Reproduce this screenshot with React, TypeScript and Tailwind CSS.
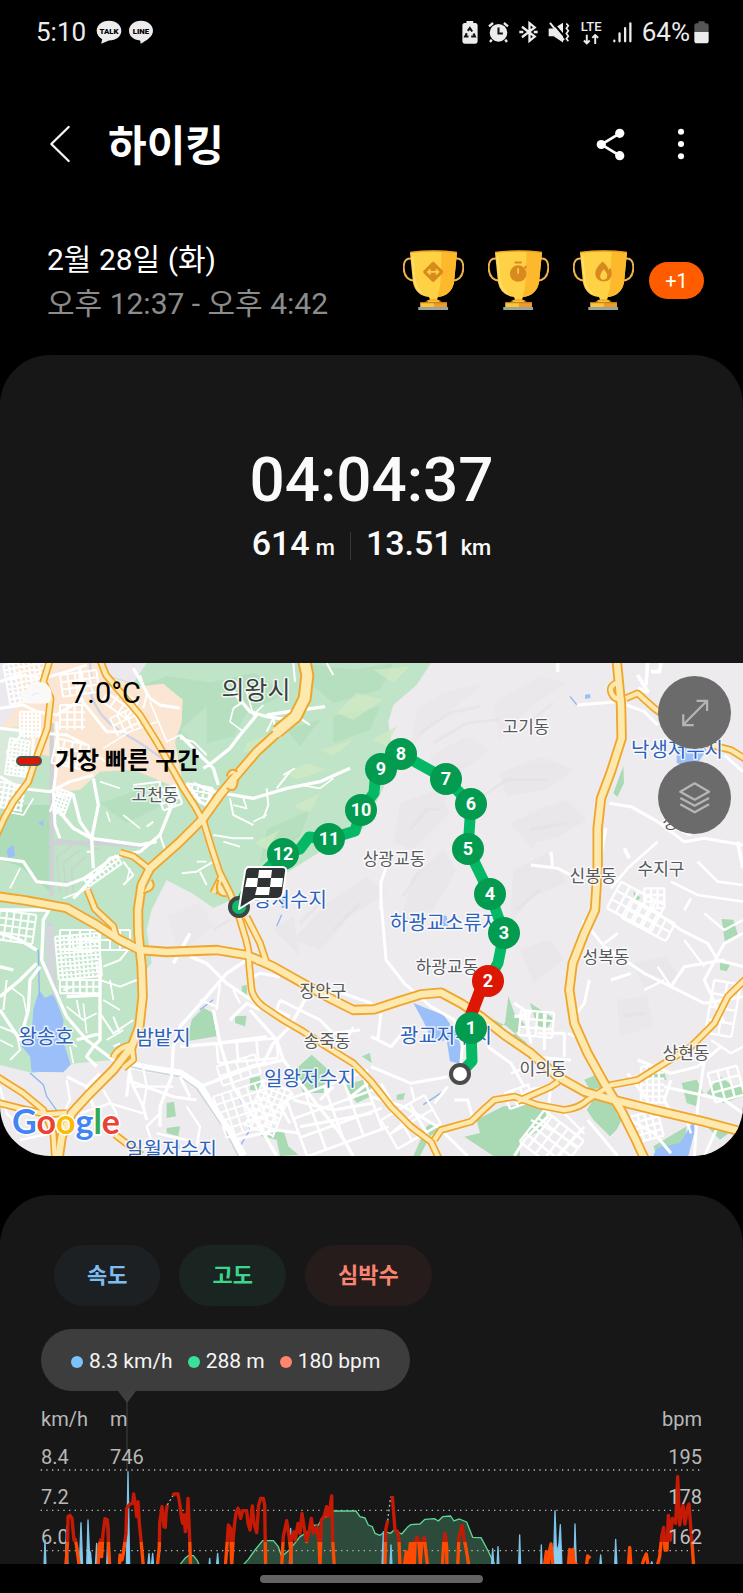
import type { ReactNode } from 'react';

const dots = [
  { n: '12', x: 283, y: 191 },
  { n: '11', x: 329, y: 176 },
  { n: '10', x: 361, y: 147 },
  { n: '9', x: 381, y: 106 },
  { n: '8', x: 401, y: 91 },
  { n: '7', x: 446, y: 116 },
  { n: '6', x: 471, y: 141 },
  { n: '5', x: 468, y: 186 },
  { n: '4', x: 490, y: 231 },
  { n: '3', x: 504, y: 270 },
  { n: '2', x: 488, y: 318, fast: true },
  { n: '1', x: 471, y: 365 },
];

const towns = [
  { name: '고천동', x: 155, y: 132 },
  { name: '고기동', x: 526, y: 64 },
  { name: '상광교동', x: 394, y: 196 },
  { name: '신봉동', x: 593, y: 213 },
  { name: '수지구', x: 661, y: 206 },
  { name: '하광교동', x: 447, y: 304 },
  { name: '성복동', x: 606, y: 294 },
  { name: '장안구', x: 323, y: 328 },
  { name: '송죽동', x: 327, y: 378 },
  { name: '이의동', x: 543, y: 406 },
  { name: '상현동', x: 686, y: 390 },
  { name: '정', x: 670, y: 159 },
];

const waters = [
  { name: '낙생저수지', x: 677, y: 87 },
  { name: '왕저수지', x: 290, y: 237 },
  { name: '하광교소류지', x: 445, y: 260 },
  { name: '왕송호', x: 46, y: 374 },
  { name: '밤밭지', x: 163, y: 375 },
  { name: '광교저수지', x: 446, y: 373 },
  { name: '일왕저수지', x: 310, y: 416 },
  { name: '일월저수지', x: 171, y: 487 },
];

// road centre lines, drawn at 3x
const highways = [
  'M300 -10 L318 36 360 86 420 156 470 236 510 306 550 376 585 430 612 480 632 546 658 626 690 690 717 761 738 830 745 860 748 911 755 981 Q762 1010 790 1031 L850 1071 910 1106 980 1151 1060 1201 1113 1255 1173 1331 1233 1391 1293 1436 1318 1490',
  'M150 -10 L130 56 152 106 142 196 105 296 85 356 40 416 12 466 -10 516',
  'M-10 1240 L70 1291 130 1341 160 1411 165 1490',
  'M-10 1318 L60 1336 140 1354 200 1350',
  'M345 1415 L425 1476',
  'M1303 1431 L1323 1401 1413 1376 Q1450 1340 1483 1311 L1543 1301 1613 1326 1693 1341 Q1740 1335 1763 1311 L1833 1266 1913 1251 1993 1201 2073 1151 2143 1081 2183 1001 2240 945',
  'M1553 1315 L1653 1271 1675 1256',
  'M1878 106 L1913 91 1963 136 2073 216 2133 246 2193 261 2240 290',
  'M1850 60 Q1825 70 1835 92 T1870 106',
  'M360 568 L400 580 450 620',
  'M262 680 L285 738 340 790 350 825 390 840',
  'M740 761 L780 840 800 900 770 895',
  'M640 690 L665 640',
  'M340 1185 Q350 1155 395 1145 L400 1190 370 1215',
];

const mainRoads = [
  'M910 -10 L920 36 912 106 885 166 830 211 770 266 710 336 660 396 610 466 540 536 450 616 425 666 414 741 415 811 425 911 428 1001 418 1091 395 1151 340 1221 270 1291 215 1351 185 1421 175 1490',
  'M-10 700 L80 713 200 735 290 786 360 831 420 861 500 867 650 861 740 876 820 911 900 956 1000 1011 1060 1041 1123 1039 1193 1016 1263 994 1323 989 1383 1021 1443 1061 1513 1116 1593 1171 1673 1241 1753 1286 1833 1309 1963 1341 2113 1376 2240 1410',
  'M1850 -10 L1863 126 1865 226 1833 326 1803 406 1793 496 1793 616 1785 741 1753 811 1718 901 1708 981 1723 1081 1763 1171 1813 1261 1863 1341 1903 1421 1935 1490',
];

const Blocks = ({ x, y, w, h, step, rot = 0 }: { x: number; y: number; w: number; h: number; step: number; rot?: number }) => {
  let d = '';
  for (let i = 0; i <= w; i += step) d += `M${i} 0V${h}`;
  for (let j = 0; j <= h; j += step) d += `M0 ${j}H${w}`;
  return <path d={d} transform={`translate(${x} ${y}) rotate(${rot})`} />;
};

const Label = ({ x, y, size, color, children }: { x: number; y: number; size: number; color: string; children: ReactNode }) => (
  <text
    x={x}
    y={y + Math.round(size * 0.37)}
    fontSize={size}
    fill={color}
    textAnchor="middle"
    stroke="#fff"
    strokeOpacity={0.75}
    strokeWidth={3}
    strokeLinejoin="round"
    paintOrder="stroke"
  >
    {children}
  </text>
);

const TrailMap = () => (
  <svg viewBox="0 0 743 493" className="block w-full" role="img" aria-label="하이킹 경로">
    <rect width="743" height="493" fill="#eeebee" />

    {/* terrain */}
    <g transform="scale(0.33333)">
      <path
        d="M0 0H1293L1250 66 1180 126 1165 176 1175 256 1150 376 1090 496 960 566 850 636 720 700 640 735 575 690 500 652 480 690 455 741 440 800 455 900 415 950 415 1061 400 1141 340 1191 230 1201 100 1231 0 1206Z"
        fill="#bfe4c8"
      />
      <path d="M0 456 60 426 150 426 155 690 60 610 0 590Z" fill="#aedcb8" />
      <path d="M340 100 500 40 640 60 620 130 540 200 600 260 520 220Z M620 60 760 30 860 90 740 150 700 220 620 240Z M900 0 1060 20 1180 0 1140 80 1000 120 930 60Z M300 420 420 380 480 430 380 480Z M860 200 960 170 900 250Z M800 500 930 440 900 520 780 600Z M1000 160 1140 130 1110 200 1000 240Z" fill="#add9b5" opacity="0.5" />
      <path d="M740 240 800 215 790 250 730 270Z M860 330 920 300 980 320 890 350Z M1010 150 1070 90 1150 110 1060 170Z M880 430 960 390 930 450Z M1113 230 1190 190 1160 250Z M760 540 840 500 800 560Z M960 260 1060 230 1000 280Z M1120 20 1230 10 1180 60Z" fill="#cfe9c4" opacity="0.8" />
      <path d="M0 0H290L322 40 420 70 490 62 548 110 545 180 525 236 545 340 520 370 400 320 300 326 240 380 155 391 150 280 0 250Z" fill="#fae6d2" />
      <path d="M0 0H40L60 120 0 200Z M300 0H440L400 60 330 40Z" fill="#ece9ee" />
      <path d="M0 195 80 190 100 300 60 400 0 440Z" fill="#d9eadb" />

      {/* relief */}
      <g fill="#e4e4e6" opacity="0.45">
        <path d="M1250 140 1330 90 1450 60 1380 120 1290 190 1230 260Z M1480 120 1620 40 1700 60 1590 130 1500 230Z M1290 280 1400 220 1470 260 1380 330 1330 420Z M1500 330 1620 280 1720 320 1640 380 1520 400Z M1580 450 1700 410 1760 470 1680 520 1600 540Z M1200 420 1310 380 1350 450 1240 560 1180 540Z" />
        <path d="M1240 640 1330 560 1370 620 1300 740 1200 780Z M1540 620 1640 570 1700 660 1600 700 1530 780Z M980 720 1100 640 1160 690 1050 760 960 860 880 830Z M500 760 600 720 640 790 540 870Z M1560 860 1650 830 1690 890 1600 960Z M1850 1010 1940 1000 1960 1090 1860 1120Z M1900 900 2000 880 2040 950 1930 970Z M1530 480 1620 440 1600 560Z M820 800 880 760 900 880Z" />
      </g>
      <g fill="none" stroke="#dfdfe2" strokeWidth="8" opacity="0.5">
        <path d="M1260 210 1350 150 1440 130 M1300 240 1400 180 1500 170 M1560 200 1660 120 M1420 420 1520 350 1640 350 M1590 500 1700 480 M1230 500 1280 440 1320 440 M1000 800 1080 720 M1550 740 1620 680 M1210 700 1260 620 M640 800 690 770 M900 780 960 720 M1870 1060 1930 1050" />
      </g>

      {/* parks */}
      <g fill="#a9dab3">
        <path d="M1870 310 1840 390 1852 402 1872 360Z M1900 685 1922 705 1905 718Z M2165 768 2200 770 2215 820 2175 840Z M2160 900 2190 905 2180 925 2160 920Z" />
        <path d="M1525 1000 1515 1080 1498 1095 1530 1125 1575 1085 1545 1055Z M1590 1020 1660 1065 1640 1100 1610 1085Z M1450 1055 1520 1090 1580 1140 1570 1160 1470 1095Z" />
        <path d="M575 1070 610 1035 640 1050 650 1120 560 1135Z M705 1060 740 1058 735 1090 705 1080Z M725 970 740 965 742 1000 725 990Z M885 1220 935 1175 985 1220 970 1290 910 1290Z M750 1245 780 1240 785 1285 750 1280Z M1035 1265 1110 1245 1113 1300 1070 1320Z M500 1320 522 1316 528 1360 500 1365Z M500 1395 540 1390 535 1420 500 1410Z M780 1418 850 1400 865 1450 895 1475 840 1479 830 1430Z M1085 1180 1110 1170 1115 1200Z" />
        <path d="M1393 1421 1440 1410 1430 1370 1510 1330 1620 1320 1650 1350 1620 1400 1560 1440 1560 1479 1480 1479Z M1780 1310 1850 1320 1870 1360 1850 1400 1830 1420 1780 1370 1760 1340Z M1753 1250 1800 1230 1830 1270 1770 1280Z M1940 1210 1990 1220 2000 1250 1940 1250Z M2045 1260 2090 1250 2110 1290 2090 1330 2060 1320Z M2120 1290 2160 1240 2200 1270 2229 1270 2229 1300 2170 1320Z M1960 1450 2060 1390 2050 1479H1970Z M2120 1390 2200 1400 2160 1430Z M1190 1295 1215 1290 1210 1310 1190 1310Z M1280 1390 1300 1380 1320 1400 1290 1420 1260 1479 1240 1479Z" />
      </g>

      {/* water */}
      <g fill="#9bbff8">
        <path d="M112 1000 120 985 135 1005 160 992 175 1030 190 1070 188 1130 212 1205 190 1228 95 1226 90 1180 65 1150 95 1110 100 1040Z" />
        <path d="M1240 1020 1290 1040 1330 1055 1370 1110 1385 1160 1390 1205 1350 1195 1340 1130 1300 1140 1270 1075Z" />
        <path d="M2030 245 2090 230 2120 260 2080 320 2030 300Z M2080 1375 2085 1400 2065 1479H1960L1970 1455 2040 1440Z M840 700 860 690 862 735 845 735Z M1325 755 1340 760 1345 790 1325 790Z M20 560 40 545 45 580 25 585Z M115 480 130 470 130 490Z M1755 95 1770 93 1772 105 1755 108Z M930 1235 940 1215 955 1240Z M520 1440 535 1430 540 1460Z" />
      </g>
      <path d="M118 1000 115 860 M90 1230 130 1265 140 1300 172 1345 M705 1275 735 1340 750 1400 720 1450 M600 1040 640 1010 M1710 100 1730 125 M1270 1325 1330 1285 M830 790 845 755" fill="none" stroke="#8fb5f2" strokeWidth="4" />

      <path d="M155 180V700 M150 780 150 850 165 1000 M160 540 300 540 450 550" fill="none" stroke="#cfd1d6" strokeWidth="13" />
      <path d="M135 790H165L162 960 140 910Z" fill="#d3d7db" />
      <path d="M180 690 170 580 230 540 300 560 M200 690 190 600 240 560 M220 690 215 620 260 580 M170 530 300 545" fill="none" stroke="#cbd3d2" strokeWidth="5" />
      <path d="M270 0 275 100 Q300 170 370 210 T490 290" fill="none" stroke="#cfd3e8" strokeWidth="7" />
    </g>

    {/* side streets, upper left */}
    <g transform="translate(0 -8) scale(0.33333)" fill="none" stroke="#fff" strokeWidth="9" strokeLinejoin="round">
      <path d="M0 80 60 60 130 70 200 50 260 30 M0 160 70 150 110 170 170 180 250 130 M0 220 130 235 200 240 260 270 M0 365 60 400 150 410 210 380 280 360 M100 250 95 340 60 360 M170 200 175 300 160 410 165 510 180 550 M240 40 240 130 280 180 320 230 380 230 M400 40 450 130 480 150 540 160" />
      <path d="M170 420 220 420 240 500 275 550 280 640 M275 550 420 570 470 560 M280 370 295 450 275 550 M170 460 220 520 275 550 M520 440 480 540 420 590 330 610 260 690 220 730 M0 610 70 620 110 680 200 690 280 660" strokeWidth="10" />
      <path d="M1050 340 960 380 860 400 760 430 640 410 580 385 M560 385 600 440 620 450 640 400 M770 180 720 240 690 280 640 320 610 340 M540 240 600 300 640 340 655 390 M700 110 750 170 800 185 870 195 M975 155 900 165 800 180" strokeWidth="10" />
      <path d="M420 60 440 120 430 160 M540 250 580 260 620 300 M690 430 700 480 740 500 760 510 M800 400 805 450 790 490 M830 400 870 350 M640 540 700 550 760 550 M640 620 590 650 545 655 M600 650 620 690 M460 500 440 515 M480 540 500 600 M400 390 480 380 480 440 M880 24 885 80 M800 230 820 190 830 240 M900 190 930 210 M700 160 730 140 M980 24 1000 60 M370 620 400 660 370 690 M280 590 260 590" strokeWidth="6" />
      <path d="M70 230 20 290 40 340 M100 430 70 480 20 470 M290 300 330 330 420 300 M310 280 390 230 470 200 M450 140 500 260 540 240 M180 320 240 330 300 310 M300 380 360 400 M320 470 330 500 M370 480 420 520 M700 160 690 200 730 230 M740 110 760 180 790 150 M850 360 885 340 M900 390 960 400 1000 370 M730 430 740 460 700 450 M760 500 800 480 M670 560 720 575 M620 620 590 620 M500 600 450 620 M390 640 380 680 M60 640 30 700 M190 730 270 700" strokeWidth="5" />
      <g strokeWidth="6">
        <Blocks x={10} y={30} w={120} h={120} step={15} rot={-10} />
        <Blocks x={30} y={250} w={60} h={110} step={12} rot={8} />
        <Blocks x={60} y={170} w={60} h={80} step={12} />
        <Blocks x={180} y={150} w={75} h={75} step={22} />
        <Blocks x={330} y={190} w={90} h={60} step={24} rot={-25} />
        <Blocks x={180} y={60} w={110} h={66} step={22} rot={-8} />
        <Blocks x={560} y={385} w={80} h={36} step={18} rot={10} />
        <Blocks x={250} y={670} w={120} h={30} step={15} rot={-35} />
        <Blocks x={175} y={400} w={45} h={75} step={11} rot={20} />
        <Blocks x={0} y={380} w={80} h={75} step={15} rot={10} />
        <Blocks x={170} y={250} w={100} h={75} step={25} rot={12} />
        <Blocks x={340} y={90} w={90} h={60} step={30} rot={35} />
        <Blocks x={470} y={410} w={60} h={60} step={20} rot={-20} />
      </g>
    </g>

    {/* side streets, upper right */}
    <g transform="translate(371 -8) scale(0.33333)" fill="none" stroke="#fff" strokeWidth="9" strokeLinejoin="round">
      <path d="M620 150 740 140 820 170 860 210 M715 445 780 455 860 500 940 560 1000 550 1116 570 M480 630 560 640 600 660 M540 590 545 640 M45 640 30 680 30 765 M1060 300 1116 350 M705 520 690 600" />
      <path d="M560 24V50 M800 60 830 110 800 100 M830 24 825 90 M870 24 865 50 840 50 M760 580 775 610 M1100 560 1116 640 M900 510 960 540" strokeWidth="11" />
      <g strokeWidth="7">
        <Blocks x={750} y={680} w={150} h={90} step={30} rot={28} />
        <Blocks x={820} y={700} w={60} h={60} step={20} />
      </g>
      <path d="M720 700 770 640 860 560 M900 680 980 720 1116 740 M940 765 960 730 M980 620 1040 680 1116 690" strokeWidth="8" />
    </g>

    {/* side streets, lower left */}
    <g transform="translate(0 237) scale(0.33333)" fill="none" stroke="#fff" strokeWidth="9" strokeLinejoin="round">
      <path d="M150 24 130 60 125 180 160 260 200 350 260 420 340 480 380 500 M110 190 60 240 0 290 M120 200 90 240 85 330 60 420 0 330 M0 100 60 120 110 150 M0 200 40 210 M300 180 300 420 280 440 260 470 290 500 M0 30 140 30 M200 290 300 285 M230 420 300 400" strokeWidth="10" />
      <path d="M300 240 360 260 410 240 M300 340 340 400 400 360 M360 400 340 350 M310 200 360 180 400 130 M0 380 50 400 60 450 30 480 M20 240 10 330 M200 420 230 440 M340 440 360 430 M220 260 190 270" strokeWidth="6" />
      <path d="M30 260 70 290 80 340 M0 420 40 440 M200 320 250 360 290 340 M230 300 240 350 M310 300 360 330 M320 420 370 390 M210 440 220 490 M250 310 260 400 M330 240 340 300" strokeWidth="5" />
      <path d="M370 490 440 505 540 520 600 560 650 640 690 700 730 768" stroke="#fff" strokeWidth="24" />
      <path d="M370 495 440 512 540 530 590 565 640 640 680 700 715 768" stroke="#cdd9d9" strokeWidth="5" />
      <path d="M520 190 570 100 M570 170 620 190 680 250 770 310 M740 180 680 220 620 290 540 380 520 440 515 530 480 620 480 680 M540 440 650 430 800 410 M640 330 660 430 700 560 780 680 830 768 M920 290 870 380 820 430 790 490 700 520 M750 330 830 420 850 480 940 600 1020 700 1060 768 M600 560 760 500 850 480 M690 360 740 310 780 330" strokeWidth="10" />
      <path d="M390 520 400 560 430 620 440 660 M380 540 520 590 590 600 M390 500 380 590 M540 530 570 590 M200 530 260 560 300 520 M260 560 280 620 M840 300 900 330 960 360 1000 400 1080 390 M1000 270 1116 310 M840 300 830 330 870 350 M760 230 780 220 840 230 M880 600 1000 630 1116 610 M900 680 1116 640 M880 580 840 620 870 670 M700 720 830 690 900 700 M960 600 1000 560 M1116 540 1040 600" />
      <path d="M0 560 20 640 60 680 M310 570 350 640 340 700 M200 540 210 600 190 640 M60 720 150 700 M240 640 330 610 430 640 M440 560 430 620 M400 560 520 560 M480 640 440 680 460 740 M560 620 600 680 590 740 M660 250 650 330 M700 270 720 310 M600 300 650 320 M1040 420 1060 380 M430 505 440 560 M470 700 560 720" strokeWidth="7" />
      <g strokeWidth="6">
        <Blocks x={165} y={110} w={130} h={130} step={13} rot={-5} />
        <Blocks x={0} y={30} w={110} h={88} step={22} rot={8} />
        <Blocks x={180} y={90} w={210} h={60} step={30} />
        <Blocks x={640} y={590} w={160} h={130} step={26} rot={-18} />
        <Blocks x={790} y={540} w={90} h={150} step={18} rot={22} />
        <Blocks x={650} y={500} w={120} h={60} step={30} rot={-18} />
        <Blocks x={180} y={240} w={120} h={40} step={20} />
      </g>
      <g strokeWidth="8">
        <Blocks x={860} y={600} w={260} h={180} step={60} rot={-20} />
        <Blocks x={650} y={430} w={180} h={60} step={60} rot={-5} />
      </g>
    </g>

    {/* side streets, lower right */}
    <g transform="translate(371 237) scale(0.33333)" fill="none" stroke="#fff" strokeWidth="9" strokeLinejoin="round">
      <path d="M30 0 45 180 100 250 180 320 250 360 275 420 270 490 M0 410 60 440 110 380 M30 340 20 420 M0 500 120 550 230 530 M230 560 190 610 M250 600 290 600 310 670 M0 590 100 620 200 680 290 768 M350 440 420 490 460 560 M540 550 530 650 460 720 430 768" />
      <path d="M660 90 700 140 820 220 900 260 1000 310 M640 60 620 140 M655 240 640 310 600 360 M780 220 720 240 M700 130 740 100 M860 40 930 90 1010 130 1040 180 1116 200 M1116 100 1060 130 1000 240 1060 370 M1000 310 1116 290 M900 260 940 200 1060 180" />
      <path d="M430 310 460 330 480 430 M520 340 520 450 M500 400 580 400 580 470 M480 470 600 480 M430 350 480 340 M800 480 900 520 980 500 1050 440 M770 520 830 600 820 640 M900 540 880 600 900 640 M1000 480 980 620 970 768 M880 560 1060 600 1116 640 M740 640 850 700 900 760 M1040 680 1000 768 M640 680 560 768 M650 660 740 768" />
      <path d="M590 400 640 420 M420 520 470 500 M440 600 470 570 520 560 M480 660 560 700 620 740 M580 640 640 700 M1000 40 1060 90 1116 60 M940 120 1000 200 M860 200 900 260 M820 270 880 240 M30 550 60 600 M60 700 130 640 180 720 M120 560 130 600 M1020 420 1080 460 1116 440 M940 640 960 700" strokeWidth="7" />
      <g strokeWidth="7">
        <Blocks x={520} y={630} w={150} h={120} step={30} rot={38} />
        <Blocks x={810} y={500} w={70} h={110} step={18} />
        <Blocks x={780} y={650} w={80} h={80} step={20} rot={-15} />
        <Blocks x={780} y={0} w={150} h={60} step={30} rot={28} />
        <Blocks x={400} y={580} w={80} h={50} step={25} rot={-20} />
        <Blocks x={1030} y={240} w={80} h={160} step={40} rot={10} />
        <Blocks x={30} y={660} w={150} h={100} step={50} rot={-30} />
        <Blocks x={450} y={330} w={100} h={75} step={25} rot={5} />
        <Blocks x={1010} y={520} w={90} h={90} step={30} rot={-15} />
      </g>
    </g>

    {/* highways */}
    <g transform="scale(0.33333)" fill="none" strokeLinejoin="round">
      {highways.map((d) => <path key={d} d={d} stroke="#f0a62c" strokeWidth="23" />)}
      {mainRoads.map((d) => <path key={d} d={d} stroke="#f0a62c" strokeWidth="31" />)}
      {highways.map((d) => <path key={d} d={d} stroke="#fde9ae" strokeWidth="13" />)}
      {mainRoads.map((d) => <path key={d} d={d} stroke="#fde9ae" strokeWidth="20" />)}
      <path d="M912 -10 L922 36 914 106 887 160 832 205" stroke="#f0a62c" strokeWidth="42" />
      <path d="M912 -10 L922 36 914 106 887 160 825 212" stroke="#fde9ae" strokeWidth="30" />
      <g stroke="#f0a62c" strokeWidth="6" fill="#fde9ae">
        <path d="M680 340 Q690 310 712 326 M680 375 Q710 395 714 350 M455 650 Q475 680 430 690 M655 650 Q640 700 680 700" />
      </g>
    </g>

    <Label x={256} y={27} size={25} color="#3b3f40">의왕시</Label>
    {towns.map((t) => <Label key={t.name} x={t.x} y={t.y} size={17} color="#55585c">{t.name}</Label>)}
    {waters.map((w) => <Label key={w.name} x={w.x} y={w.y} size={20} color="#2c62bd">{w.name}</Label>)}

    {/* trail */}
    <path
      d="M460 411 L472 398 471 365 M488 318 L498 300 504 270 490 231 468 186 471 141 446 116 401 91 381 106 375 118 374 130 361 147 355 168 329 176 309 174 300 186 283 191 250 222 239 244"
      fill="none"
      stroke="#05b865"
      strokeWidth="11"
      strokeLinejoin="round"
    />
    <path d="M471 352 L484 318" stroke="#dc1703" strokeWidth="12" />
    <circle cx="239" cy="244" r="9" fill="#0fb968" stroke="#3f4444" strokeWidth="4" />
    <circle cx="460" cy="411" r="9" fill="#fff" stroke="#4b4b4b" strokeWidth="4" />
    {dots.map((m) => (
      <g key={m.n}>
        <circle cx={m.x} cy={m.y} r="16" fill={m.fast ? '#dc1703' : '#029b4f'} />
        <text x={m.x} y={m.y + 6} fontSize="18" fontWeight="700" fill="#fff" textAnchor="middle">{m.n}</text>
      </g>
    ))}

    {/* finish flag */}
    <path d="M249 204 H282 Q287 204 286 209 L283 230 Q282 236 277 236 H255 L239 246 L245 208 Q246 204 249 204Z" fill="#303334" stroke="#fff" strokeWidth="2" strokeLinejoin="round" />
    <g fill="#fff">
      <path d="M259 207H272L271 215H258Z M247 215H258L257 224H245Z M271 215H283L282 224H270Z M257 224H270L269 232H255Z" />
    </g>

    {/* map provider */}
    <text x="12" y="471" fontSize="34" fontWeight="700" fontFamily="Lato, sans-serif" stroke="#fff" strokeWidth="3" paintOrder="stroke">
      <tspan fill="#4285f4">G</tspan>
      <tspan fill="#ea4335">o</tspan>
      <tspan fill="#fbbc05">o</tspan>
      <tspan fill="#4285f4">g</tspan>
      <tspan fill="#34a853">l</tspan>
      <tspan fill="#ea4335">e</tspan>
    </text>
  </svg>
);

const Trophy = ({ children }: { children: ReactNode }) => (
  <svg viewBox="98 748 184 184" className="size-[61px]" aria-hidden="true">
    <path d="M124 774 Q100 770 100 803 Q102 838 134 841 M256 774 Q280 770 280 803 Q278 838 246 841" fill="none" stroke="#eeb34b" strokeWidth="6" />
    <path d="M119 755 Q190 746 261 755 L252 845 Q245 884 204 890 L200 897 Q202 903 220 907 H160 Q178 903 180 897 L176 890 Q135 884 128 845Z" fill="#ffd145" />
    <path d="M214 751 L261 755 252 845 Q245 884 200 890 Q212 870 212 820Z" fill="#fdb92b" />
    <path d="M119 755 Q190 747 261 755" fill="none" stroke="#e9a320" strokeWidth="4" />
    <path d="M127 766 L134 845 Q140 868 158 880" fill="none" stroke="#ffe07a" strokeWidth="4" />
    <path d="M165 903 Q190 888 215 903Z" fill="#f3b02c" />
    <rect x="150" y="906" width="80" height="15" fill="#ffc53a" />
    <rect x="191" y="906" width="39" height="15" fill="#f29a27" />
    <path d="M150 907 H230" stroke="#b97b18" strokeWidth="3" />
    <rect x="144" y="920" width="90" height="9" fill="#98a69d" />
    <g fill="#d98a1f">{children}</g>
  </svg>
);

const StatusBar = () => (
  <div className="flex h-16 items-center justify-between pr-[34px] pl-9 text-[26px] text-[#ececec]">
    <div className="flex items-center gap-[6px]">
      <span className="mr-1">5:10</span>
      <svg viewBox="286 58 78 74" className="h-6 w-[26px]" aria-hidden="true">
        <path d="M325 60 C348 60 363 74 363 91 C363 108 348 121 325 121 L301 131 L304 117 C293 111 287 102 287 91 C287 74 302 60 325 60Z" fill="#ececec" />
        <text x="325" y="101" fontSize="24" fontWeight="900" textAnchor="middle" fill="#000">TALK</text>
      </svg>
      <svg viewBox="384 58 76 74" className="h-6 w-[26px]" aria-hidden="true">
        <path d="M422 60 C444 60 459 74 459 91 C459 108 440 121 421 131 C420 127 421 124 419 121 C398 119 385 107 385 91 C385 74 400 60 422 60Z" fill="#ececec" />
        <text x="422" y="101" fontSize="24" fontWeight="900" textAnchor="middle" fill="#000">LINE</text>
      </svg>
    </div>
    <div className="flex items-center gap-[10px]">
      <svg viewBox="269 62 47 68" className="h-[23px] w-4" aria-hidden="true">
        <path d="M282 62H302V68H308Q315 68 315 76V121Q315 129 307 129H278Q270 129 270 121V76Q270 68 277 68H282Z" fill="#ececec" />
        <path d="M286 91 L292 83 L299 93 M303 99 L307 108 H296 M288 108 H278 L283 98" fill="none" stroke="#111" strokeWidth="6" />
      </svg>
      <svg viewBox="349 64 62 62" className="size-[21px]" aria-hidden="true">
        <circle cx="380" cy="96" r="26" fill="#ececec" />
        <path d="M352 77 364 67 M408 77 396 67 M360 116 355 123 M400 116 405 123" stroke="#ececec" strokeWidth="7" />
        <path d="M380 80V98H393" fill="none" stroke="#111" strokeWidth="6" />
      </svg>
      <svg viewBox="441 62 58 66" className="h-[22px] w-[19px]" fill="none" stroke="#ececec" strokeWidth="7" aria-hidden="true">
        <path d="M450 79 L489 109 L473 122 V68 L489 81 L450 111 M442 95H454 M486 95H498" />
      </svg>
      <svg viewBox="528 64 66 62" className="h-[21px] w-[22px]" aria-hidden="true">
        <path d="M530 83 H545 L573 66 V125 L545 106 H530Z" fill="#ececec" />
        <path d="M541 64 L585 116" stroke="#000" strokeWidth="6" />
        <path d="M534 66 L576 118" stroke="#ececec" strokeWidth="6" />
        <path d="M583 68 l6 7 -6 7 6 8 -6 8 6 8 -6 8 6 7" fill="none" stroke="#ececec" strokeWidth="5" />
      </svg>
      <div className="flex w-[23px] flex-col items-center">
        <span className="text-[13px] leading-[14px] font-medium">LTE</span>
        <svg viewBox="636 97 48 34" className="h-[11px] w-4" aria-hidden="true">
          <path d="M647 99V125 M638 117 L647 126 656 117 M673 128V101 M664 109 L673 100 682 109" fill="none" stroke="#ececec" strokeWidth="6" />
        </svg>
      </div>
      <svg viewBox="719 64 58 62" className="h-[21px] w-[19px]" stroke="#ececec" strokeWidth="7" strokeLinecap="round" aria-hidden="true">
        <path d="M723 120V122 M739 98V122 M756 82V122 M772 67V122" />
      </svg>
      <span className="flex items-center gap-1">
        64%
        <svg viewBox="967 62 45 67" className="h-[23px] w-[15px]" aria-hidden="true">
          <path d="M980 62H999V68H1004Q1011 68 1011 76V94H968V76Q968 68 975 68H980Z" fill="#555" />
          <path d="M968 94H1011V121Q1011 128 1003 128H976Q968 128 968 121Z" fill="#ececec" />
        </svg>
      </span>
    </div>
  </div>
);

const AppBar = () => (
  <header className="flex h-40 items-center justify-between px-12 text-white">
    <div className="flex items-center gap-9">
      <button type="button" aria-label="뒤로" className="flex w-6 justify-center">
        <svg viewBox="150 376 64 114" className="h-[38px] w-[22px]" fill="none" stroke="#f5f5f5" strokeWidth="7" strokeLinecap="round" strokeLinejoin="round">
          <path d="M208 382 L156 433 L208 484" />
        </svg>
      </button>
      <h1 className="pt-[5px] text-[42px] leading-none font-bold">하이킹</h1>
    </div>
    <div className="flex items-center gap-[42px]">
      <button type="button" aria-label="공유">
        <svg viewBox="676 384 88 98" className="h-[33px] w-[29px]" fill="#fff">
          <path d="M748 399 L692 433 L748 467" fill="none" stroke="#fff" strokeWidth="8" />
          <circle cx="748" cy="399" r="14" />
          <circle cx="692" cy="433" r="14" />
          <circle cx="748" cy="467" r="14" />
        </svg>
      </button>
      <button type="button" aria-label="옵션 더보기" className="flex w-7 justify-center">
        <svg viewBox="917 386 22 94" className="h-8 w-2" fill="#fff">
          <circle cx="928" cy="397" r="9" />
          <circle cx="928" cy="433" r="9" />
          <circle cx="928" cy="469" r="9" />
        </svg>
      </button>
    </div>
  </header>
);

const heartLeft =
  'M198 530 L203 450 204 380 210 376 216 385 219 420 222 450 226 448 230 470 238 530 M294 530 L297 470 302 450 305 500 309 430 315 386 322 390 325 450 329 530 M358 530 L360 495 366 510 370 490 374 460 378 430 380 355 390 342 398 340 401 312 406 345 410 380 414 335 418 400 424 460 430 530 M472 530 L478 470 479 400 486 350 492 410 496 412 498 370 502 345 M518 318 L522 312 534 312 540 345 544 380 548 400 552 375 556 425 560 400 564 325 568 420 572 530 M676 530 L682 450 685 405 692 415 695 530 700 440 704 400 708 370 714 355 722 385 728 362 740 362 744 400 750 420 757 348 762 400 770 428 776 345 782 325 790 325 794 345 797 530 M845 530 L850 440 860 392 866 430 872 480 872 530 875 440 882 425 886 450 894 400 900 430 906 370 912 410 920 455 928 420 934 385 940 430 950 410 957 455 960 530 964 390 972 380 980 350 984 380 990 355 995 318 998 450 1003 530';

const heartRight =
  'M42 530 L44 420 50 392 M64 318 L68 370 72 420 80 425 84 450 87 530 M100 530 L106 485 112 530 118 460 122 530 126 460 130 520 132 460 138 442 144 460 148 520 152 460 160 442 164 480 170 530 M214 530 L218 460 222 430 227 470 228 530 M260 530 L264 440 274 406 278 440 286 480 294 530 M520 530 L526 485 532 530 536 480 540 462 546 530 M592 530 L596 478 600 530 606 478 610 530 620 520 M646 530 L650 498 658 505 M772 530 L776 472 780 530 M812 530 L820 505 826 492 832 530 M858 530 L866 500 872 440 878 412 882 480 888 480 892 376 898 450 904 385 914 400 920 260 926 405 936 345 942 402 950 350 954 342 960 420 964 470 968 530';

const WorkoutChart = () => (
  <svg viewBox="0 0 743 173" className="block w-full" role="img" aria-label="속도, 고도, 심박수 그래프">
    <defs>
      <linearGradient id="zone" gradientUnits="userSpaceOnUse" x1="0" y1="240" x2="0" y2="530">
        <stop offset="74.5%" stopColor="#c71a05" />
        <stop offset="74.5%" stopColor="#ff4a02" />
      </linearGradient>
    </defs>
    <path d="M118 0H136L127 12Z" fill="#3f3f3f" />
    <path d="M127 10V80" stroke="#454545" strokeWidth="1" />
    <g transform="translate(0 -1) scale(0.33333)" strokeLinejoin="round" strokeLinecap="round">
      <g fill="#2d4b3b" stroke="#5fd795" strokeWidth="4">
        <path d="M535 530 555 505 565 497 580 497 592 512 600 530" />
        <path d="M725 530 745 508 765 480 788 452 820 452 835 470 845 500 870 478 900 440 925 425 935 406 955 405 965 388 985 375 1000 363 1068 363 1080 380 1095 384 1105 405 1117 410 1125 430 1140 436 1155 425 1172 430 1182 420 1205 432 1222 412 1232 404 1260 402 1275 388 1303 386 1315 393 1328 380 1352 378 1362 393 1378 387 1400 396 1418 442 1443 443 1463 480 1487 530" />
      </g>
    </g>
    <g transform="translate(0 -1) scale(0.33333)" fill="none" stroke="#b9b9b9" strokeWidth="4" strokeDasharray="4 13">
      <path d="M122 240H2108 M122 361H2108 M122 482H2108" />
      <path d="M502 345 L518 318 M1163 392 L1172 320" strokeDasharray="6 8" />
    </g>
    <g fill="#b8b8b8" fontSize="20">
      <text x="41" y="35">km/h</text>
      <text x="110" y="35">m</text>
      <text x="702" y="35" textAnchor="end">bpm</text>
      <text x="41" y="73">8.4</text>
      <text x="110" y="73">746</text>
      <text x="702" y="73" textAnchor="end">195</text>
      <text x="41" y="113">7.2</text>
      <text x="41" y="153">6.0</text>
    </g>
    <g transform="translate(0 -1) scale(0.33333)" fill="#8dcdf0" stroke="#7cc3ea" strokeWidth="4" strokeLinejoin="round">
      <path d="M132 530 135 450 138 530Z M196 530 200 410 204 530Z M238 530 243 398 248 530Z M260 530 264 390 268 480 272 490 275 530Z M286 530 290 460 294 530Z M320 530 325 390 329 530Z M379 530 384 245 389 530Z M443 530 447 490 450 530Z M454 530 458 490 461 530Z M627 530 629 505 631 530Z M649 530 653 490 656 530Z M868 530 872 415 876 530Z" />
      <path transform="translate(1113 0)" d="M33 530 37 425 42 530Z M57 530 60 465 63 530Z M361 530 365 476 369 530Z M378 530 381 470 384 530Z M443 530 446 435 449 530Z M509 530 511 465 513 530Z M547 530 552 362 556 470 560 480 564 460 568 404 573 530Z M609 530 612 402 616 530Z M686 530 689 495 692 530Z M731 530 734 448 738 530Z M838 530 842 515 848 530Z" />
    </g>
    <g transform="translate(0 -1) scale(0.33333)" fill="none" stroke="url(#zone)" strokeWidth="10" strokeLinejoin="round">
      <path d={heartLeft} />
      <path d={heartRight} transform="translate(1113 0)" />
    </g>
    <g fill="#c0c0c0" fontSize="20" textAnchor="end">
      <text x="702" y="113">178</text>
      <text x="702" y="153">162</text>
    </g>
  </svg>
);

const chips = [
  { label: '속도', style: 'bg-[#1c2023] text-[#7ebdf2]' },
  { label: '고도', style: 'bg-[#1a2420] text-[#3bd78f]' },
  { label: '심박수', style: 'bg-[#251c1b] text-[#f98470]' },
];

const readings = [
  { value: '8.3 km/h', dot: 'bg-[#7cc2fb]' },
  { value: '288 m', dot: 'bg-[#38e098]' },
  { value: '180 bpm', dot: 'bg-[#ff866c]' },
];

export default function App() {
  return (
    <div className="min-h-screen bg-black text-white [font-family:Roboto,'Noto_Sans_CJK_KR',sans-serif]">
      <StatusBar />
      <AppBar />

      <section className="flex h-[131px] items-start justify-between pt-[14px] pr-[39px] pl-[47px]">
        <div className="text-[30px] leading-[44px]">
          <p>2월 28일 (화)</p>
          <p className="text-[#8c8c8c]">오후 12:37 - 오후 4:42</p>
        </div>
        <div className="flex items-center gap-[15px] pt-3">
          <div className="flex gap-6">
            <Trophy>
              <rect x="166" y="791" width="46" height="46" rx="6" transform="rotate(45 189 814)" />
              <path d="M174 814H204 M181 806 173 814 181 822 M197 806 205 814 197 822" fill="none" stroke="#ffd145" strokeWidth="5" />
            </Trophy>
            <Trophy>
              <circle cx="189" cy="819" r="25" />
              <path d="M178 783H200V789H178Z M207 797 213 795 215 801 209 806Z" />
              <path d="M189 803V820" stroke="#ffd145" strokeWidth="5" />
            </Trophy>
            <Trophy>
              <path d="M187 783 Q205 798 204 808 L210 801 Q216 812 215 822 Q212 842 190 843 Q166 841 165 819 Q166 802 187 783Z" />
              <path d="M191 806 Q204 821 201 829 Q199 838 190 838 Q180 837 180 827 Q180 818 191 806Z" fill="#ffd145" />
            </Trophy>
          </div>
          <span className="flex h-[37px] w-[55px] items-center justify-center rounded-full bg-[#ff5c00] text-[20px] leading-none">+1</span>
        </div>
      </section>

      <section className="overflow-hidden rounded-[50px] bg-[#171717]">
        <div className="flex h-[308px] flex-col items-center pt-[85px] font-medium text-[#fafafa]">
          <p className="text-[62px] leading-[80px]">04:04:37</p>
          <div className="flex items-center gap-[15px] text-[34px] leading-[46px]">
            <p className="flex items-baseline gap-[6px]">
              <span>614</span>
              <span className="text-[22px]">m</span>
            </p>
            <span className="h-7 w-px bg-[#363636]" />
            <p className="flex items-baseline gap-2">
              <span>13.51</span>
              <span className="text-[22px]">km</span>
            </p>
          </div>
        </div>

        <div className="relative">
          <TrailMap />
          <div className="absolute top-3 left-4 text-black">
            <div className="flex items-center gap-[18px]">
              <svg viewBox="64 84 98 70" className="ml-1 h-6 w-[33px]" aria-hidden="true">
                <path d="M86 150 Q66 148 66 128 Q68 110 84 111 Q92 84 120 86 Q148 86 157 112 Q162 150 138 150Z" fill="#faf9fa" />
                <path d="M100 128 Q108 116 120 122" fill="none" stroke="#e9e7eb" strokeWidth="3" />
              </svg>
              <span className="text-[29px] leading-9">7.0°C</span>
            </div>
            <div className="mt-8 flex items-center gap-[13px]">
              <span className="h-[10px] w-[26px] rounded-full border-2 border-[#51504a] bg-[#dc1703]" />
              <span className="text-[24px] leading-9 font-bold">가장 빠른 구간</span>
            </div>
          </div>
          <div className="absolute top-[13px] right-3 flex flex-col gap-3">
            <button type="button" aria-label="지도 확대" className="flex size-[73px] items-center justify-center rounded-full bg-[#6b6b6b]">
              <svg viewBox="928 130 86 88" className="size-7" fill="none" stroke="#b5b5b5" strokeWidth="7">
                <path d="M934 211 L1008 136 M976 136H1009V168 M934 178V212H967" />
              </svg>
            </button>
            <button type="button" aria-label="지도 유형" className="flex size-[73px] items-center justify-center rounded-full bg-[#6b6b6b]">
              <svg viewBox="922 380 98 98" className="size-8" fill="none" stroke="#b5b5b5" strokeWidth="7" strokeLinejoin="round">
                <path d="M970 384 L1014 410 970 434 926 410Z M926 429 L970 453 1014 429 M926 448 L970 473 1014 448" />
              </svg>
            </button>
          </div>
        </div>
      </section>

      <section className="mt-[39px] rounded-t-[50px] bg-[#171717] pt-[50px]">
        <div className="flex gap-[19px] px-[54px]">
          {chips.map((chip) => (
            <button key={chip.label} type="button" className={`h-[61px] rounded-full px-[33px] text-[22px] font-bold ${chip.style}`}>
              {chip.label}
            </button>
          ))}
        </div>
        <div className="mt-[23px] ml-[41px] flex h-[62px] w-fit items-center gap-[15px] rounded-full bg-[#3d3d3d] px-[30px] pt-1 text-[21px] text-[#f5f5f5]">
          {readings.map((r) => (
            <span key={r.value} className="flex items-center gap-[6px]">
              <span className={`size-3 rounded-full ${r.dot}`} />
              {r.value}
            </span>
          ))}
        </div>
        <WorkoutChart />
      </section>

      <footer className="flex h-[29px] justify-center bg-black pt-[11px]">
        <span className="h-2 w-[223px] rounded-full bg-[#636363]" />
      </footer>
    </div>
  );
}
